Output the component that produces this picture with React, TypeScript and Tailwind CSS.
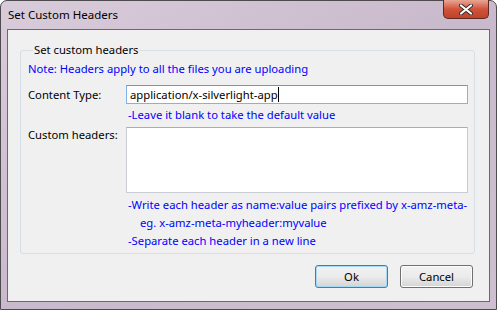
import React from 'react';

const helpLines = [
  { text: '-Write each header as name:value pairs prefixed by x-amz-meta-', indent: false },
  { text: 'eg. x-amz-meta-myheader:myvalue', indent: true },
  { text: '-Separate each header in a new line', indent: false },
];

const CloseGlyph = () => (
  <svg width="14" height="11" viewBox="0 0 14 11">
    <path d="M2 1.5 L12 9.5 M12 1.5 L2 9.5" stroke="#3a2a2a" strokeWidth="4" strokeLinecap="round" />
    <path d="M2 1.5 L12 9.5 M12 1.5 L2 9.5" stroke="#ffffff" strokeWidth="2.2" strokeLinecap="round" />
  </svg>
);

export default function App() {
  return (
    <div
      className="w-[497px] h-[310px] flex flex-col px-[6px] pb-[7px] border border-[#4f4a50] rounded-t-[7px] bg-gradient-to-br from-[#d9ccda] via-[#c9b9cc] to-[#cdbfd0] text-[11.25px] text-black"
      style={{ fontFamily: '"Noto Sans", "Liberation Sans", sans-serif' }}
    >
      {/* Title bar */}
      <div className="h-[28px] flex items-start justify-between">
        <span className="mt-[6px] ml-[1px] leading-[16px] text-[11.5px]">Set Custom Headers</span>
        <button className="w-[46px] h-[19px] -mt-px mr-px flex items-center justify-center rounded-b-[5px] border border-[#5b2a22] border-t-0 bg-gradient-to-b from-[#e8a595] via-[#d0533b] to-[#c2402b]">
          <CloseGlyph />
        </button>
      </div>

      {/* Client area */}
      <div className="flex-1 flex flex-col bg-[#f0f0f0] border border-[#6a6a6a] pl-[12px] pr-[14px] pt-[12px]">
        <fieldset className="w-[455px] border border-[#d5dfe5] rounded-[3px] pl-[7px] pr-[6px] pb-[3px]">
          <legend className="ml-[5px] px-[1px] leading-[16px]">Set custom headers</legend>
          <div className="mt-[3px] leading-[16px] text-[#0000ff]">
            Note: Headers apply to all the files you are uploading
          </div>

          <div className="mt-[8px] flex items-center">
            <span className="w-[98px] leading-[16px]">Content Type:</span>
            <div className="w-[342px] h-[19px] flex items-center border border-[#7eb4ea] border-t-[#569de5] bg-white px-[3px] leading-[16px]">
              <span>application/x-silverlight-app</span>
              <span className="w-px h-[15px] bg-black" />
            </div>
          </div>
          <div className="mt-[3px] ml-[100px] leading-[16px] text-[#0000ff]">
            -Leave it blank to take the default value
          </div>

          <div className="mt-[4px] flex items-start">
            <span className="w-[98px] leading-[16px]">Custom headers:</span>
            <div className="w-[342px] h-[66px] border border-[#c9ccd3] border-t-[#abadb3] bg-white" />
          </div>
          <div className="mt-[3px] ml-[100px] text-[#0000ff]">
            {helpLines.map((l) => (
              <div key={l.text} className={`leading-[18px] whitespace-nowrap ${l.indent ? 'pl-[12px]' : ''}`}>
                {l.text}
              </div>
            ))}
          </div>
        </fieldset>

        <div className="mt-[11px] w-[455px] flex justify-end gap-[12px] pr-[2px]">
          <button className="w-[73px] h-[23px] rounded-[3px] border border-[#3c7fb1] shadow-[inset_0_0_0_1px_#a6d9f4] bg-gradient-to-b from-[#f2f2f2] via-[#ebebeb] to-[#d4d4d4] leading-[16px]">
            Ok
          </button>
          <button className="w-[73px] h-[23px] rounded-[3px] border border-[#707070] shadow-[inset_0_0_0_1px_#fcfcfc] bg-gradient-to-b from-[#f2f2f2] via-[#ebebeb] to-[#d4d4d4] leading-[16px]">
            Cancel
          </button>
        </div>
      </div>
    </div>
  );
}
